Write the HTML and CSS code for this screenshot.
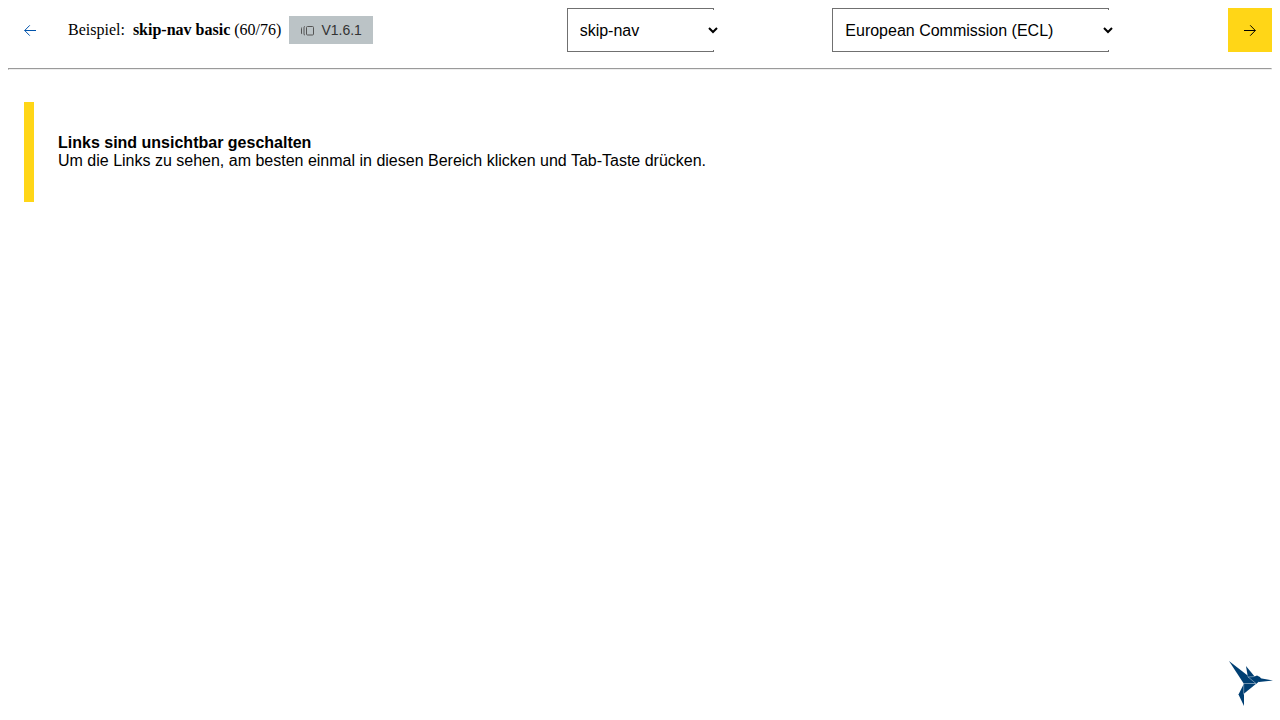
FILE: index.html
```html
<!DOCTYPE html>
<html lang="de">
<head>
<meta charset="utf-8">
<meta name="viewport" content="width=device-width, initial-scale=1">
<title>skip-nav basic</title>
<link rel="stylesheet" href="styles.css">
</head>
<body>
<header class="toolbar">
  <div class="sample">
    <button class="nav-button nav-button-ghost" type="button" aria-label="Zurück">
      <svg class="arrow" viewBox="0 0 12 12" aria-hidden="true"><path d="M12 6.500H.7M5.800 1.300.7 6.500l5.100 5.200"/></svg>
    </button>
    <div class="sample-label">
      <span>Beispiel:</span>
      <span><strong>skip-nav basic</strong> (60/76)</span>
      <span class="badge">
        <svg class="badge-icon" viewBox="0 0 15 15" aria-hidden="true"><path d="M6.500 4.500q0-1 1-1h5q1 0 1 1v6.500q0 1-1 1h-5q-1 0-1-1zM5 3.500q-1 0-1 1v6.500q0 1 1 1M2 4.500q-.5 0-.5 1v4.500q0 1 .5 1"/></svg>
        <span>V1.6.1</span>
      </span>
    </div>
  </div>
  <div class="picker picker-component">
    <select class="picker-select" aria-label="Komponente"><option>skip-nav</option></select>
  </div>
  <div class="picker picker-theme">
    <select class="picker-select" aria-label="Theme"><option>European Commission (ECL)</option></select>
  </div>
  <button class="nav-button nav-button-primary" type="button" aria-label="Weiter">
    <svg class="arrow" viewBox="0 0 12 12" aria-hidden="true"><path d="M0 6.500h11.300M6.200 1.300l5.100 5.200-5.100 5.200"/></svg>
  </button>
</header>
<hr class="divider">
<main class="content">
  <section class="notice">
    <strong>Links sind unsichtbar geschalten</strong>
    <span>Um die Links zu sehen, am besten einmal in diesen Bereich klicken und Tab-Taste drücken.</span>
  </section>
</main>
<svg class="logo" viewBox="0 0 60 60" role="img" aria-label="KoliBri">
  <path class="logo-body" d="M9 6 27 20 36 28.500 24 29Z"/>
  <path class="logo-body" d="M26 11 35 22 28 23Z"/>
  <path class="logo-body" d="M27 21.500 34.500 21.500 37 20.500 40 22 41.500 24.500 36 29Z"/>
  <path class="logo-body" d="M24 28.500 36.500 28.500 23.500 39Z"/>
  <path class="logo-body" d="M24 28.500 24 51 18.500 39.500Z"/>
  <path class="logo-body" d="M39 23 53 25.500 39 27Z"/>
  <path class="logo-lines" d="M27.500 21.500 36 28.500M24 28.500h12M23.700 28.500v11M28 22l6.500-.5"/>
</svg>
</body>
</html>
```

FILE: styles.css
```css
body {
  margin: 8px;
  background: #fff;
  color: #000;
  font: 16px/18px "Liberation Serif", serif;
}

.toolbar {
  display: flex;
  align-items: center;
  justify-content: space-between;
}

.sample {
  display: flex;
  align-items: center;
  gap: 16px;
  min-width: 440px;
}

.sample-label {
  display: flex;
  align-items: center;
  gap: 8px;
}

.nav-button {
  display: flex;
  align-items: center;
  justify-content: center;
  width: 44px;
  height: 44px;
  padding: 0;
  border: 0;
  cursor: pointer;
}

.nav-button-ghost {
  background: transparent;
  color: #0053ab;
}

.nav-button-primary {
  background: #ffd617;
  color: #000;
}

.arrow {
  width: 12px;
  height: 12px;
  fill: none;
  stroke: currentColor;
}

.badge {
  display: flex;
  align-items: center;
  gap: 6px;
  padding: 5px 11px;
  background: #bbc3c6;
  color: #333;
  font: 14px/18px "Liberation Sans", sans-serif;
}

.badge-icon {
  width: 15px;
  height: 15px;
  fill: none;
  stroke: #555;
}

.picker {
  box-sizing: border-box;
  height: 44px;
  padding: 1px 0;
  border: 1px solid #707070;
}

.picker-component {
  width: 147px;
}

.picker-theme {
  width: 277px;
}

/* The control is wider than its frame and covers the frame's right edge. */
.picker-select {
  box-sizing: border-box;
  width: calc(100% + 8px);
  height: 40px;
  padding: 0 8px;
  border: 0;
  background: #fff;
  color: #000;
  font: 16px/18px "Liberation Sans", sans-serif;
}

.divider {
  margin: 16px 0;
}

.content {
  padding: 16px;
  font-family: "Liberation Sans", sans-serif;
}

.notice {
  display: flex;
  flex-direction: column;
  padding: 32px 24px;
  border-left: 10px solid #ffd617;
}

.logo {
  position: fixed;
  right: 0;
  bottom: 5px;
  width: 60px;
  height: 60px;
}

.logo-body {
  fill: #003f73;
}

.logo-lines {
  fill: none;
  stroke: #a9c1d4;
  stroke-width: 0.6;
}
```
